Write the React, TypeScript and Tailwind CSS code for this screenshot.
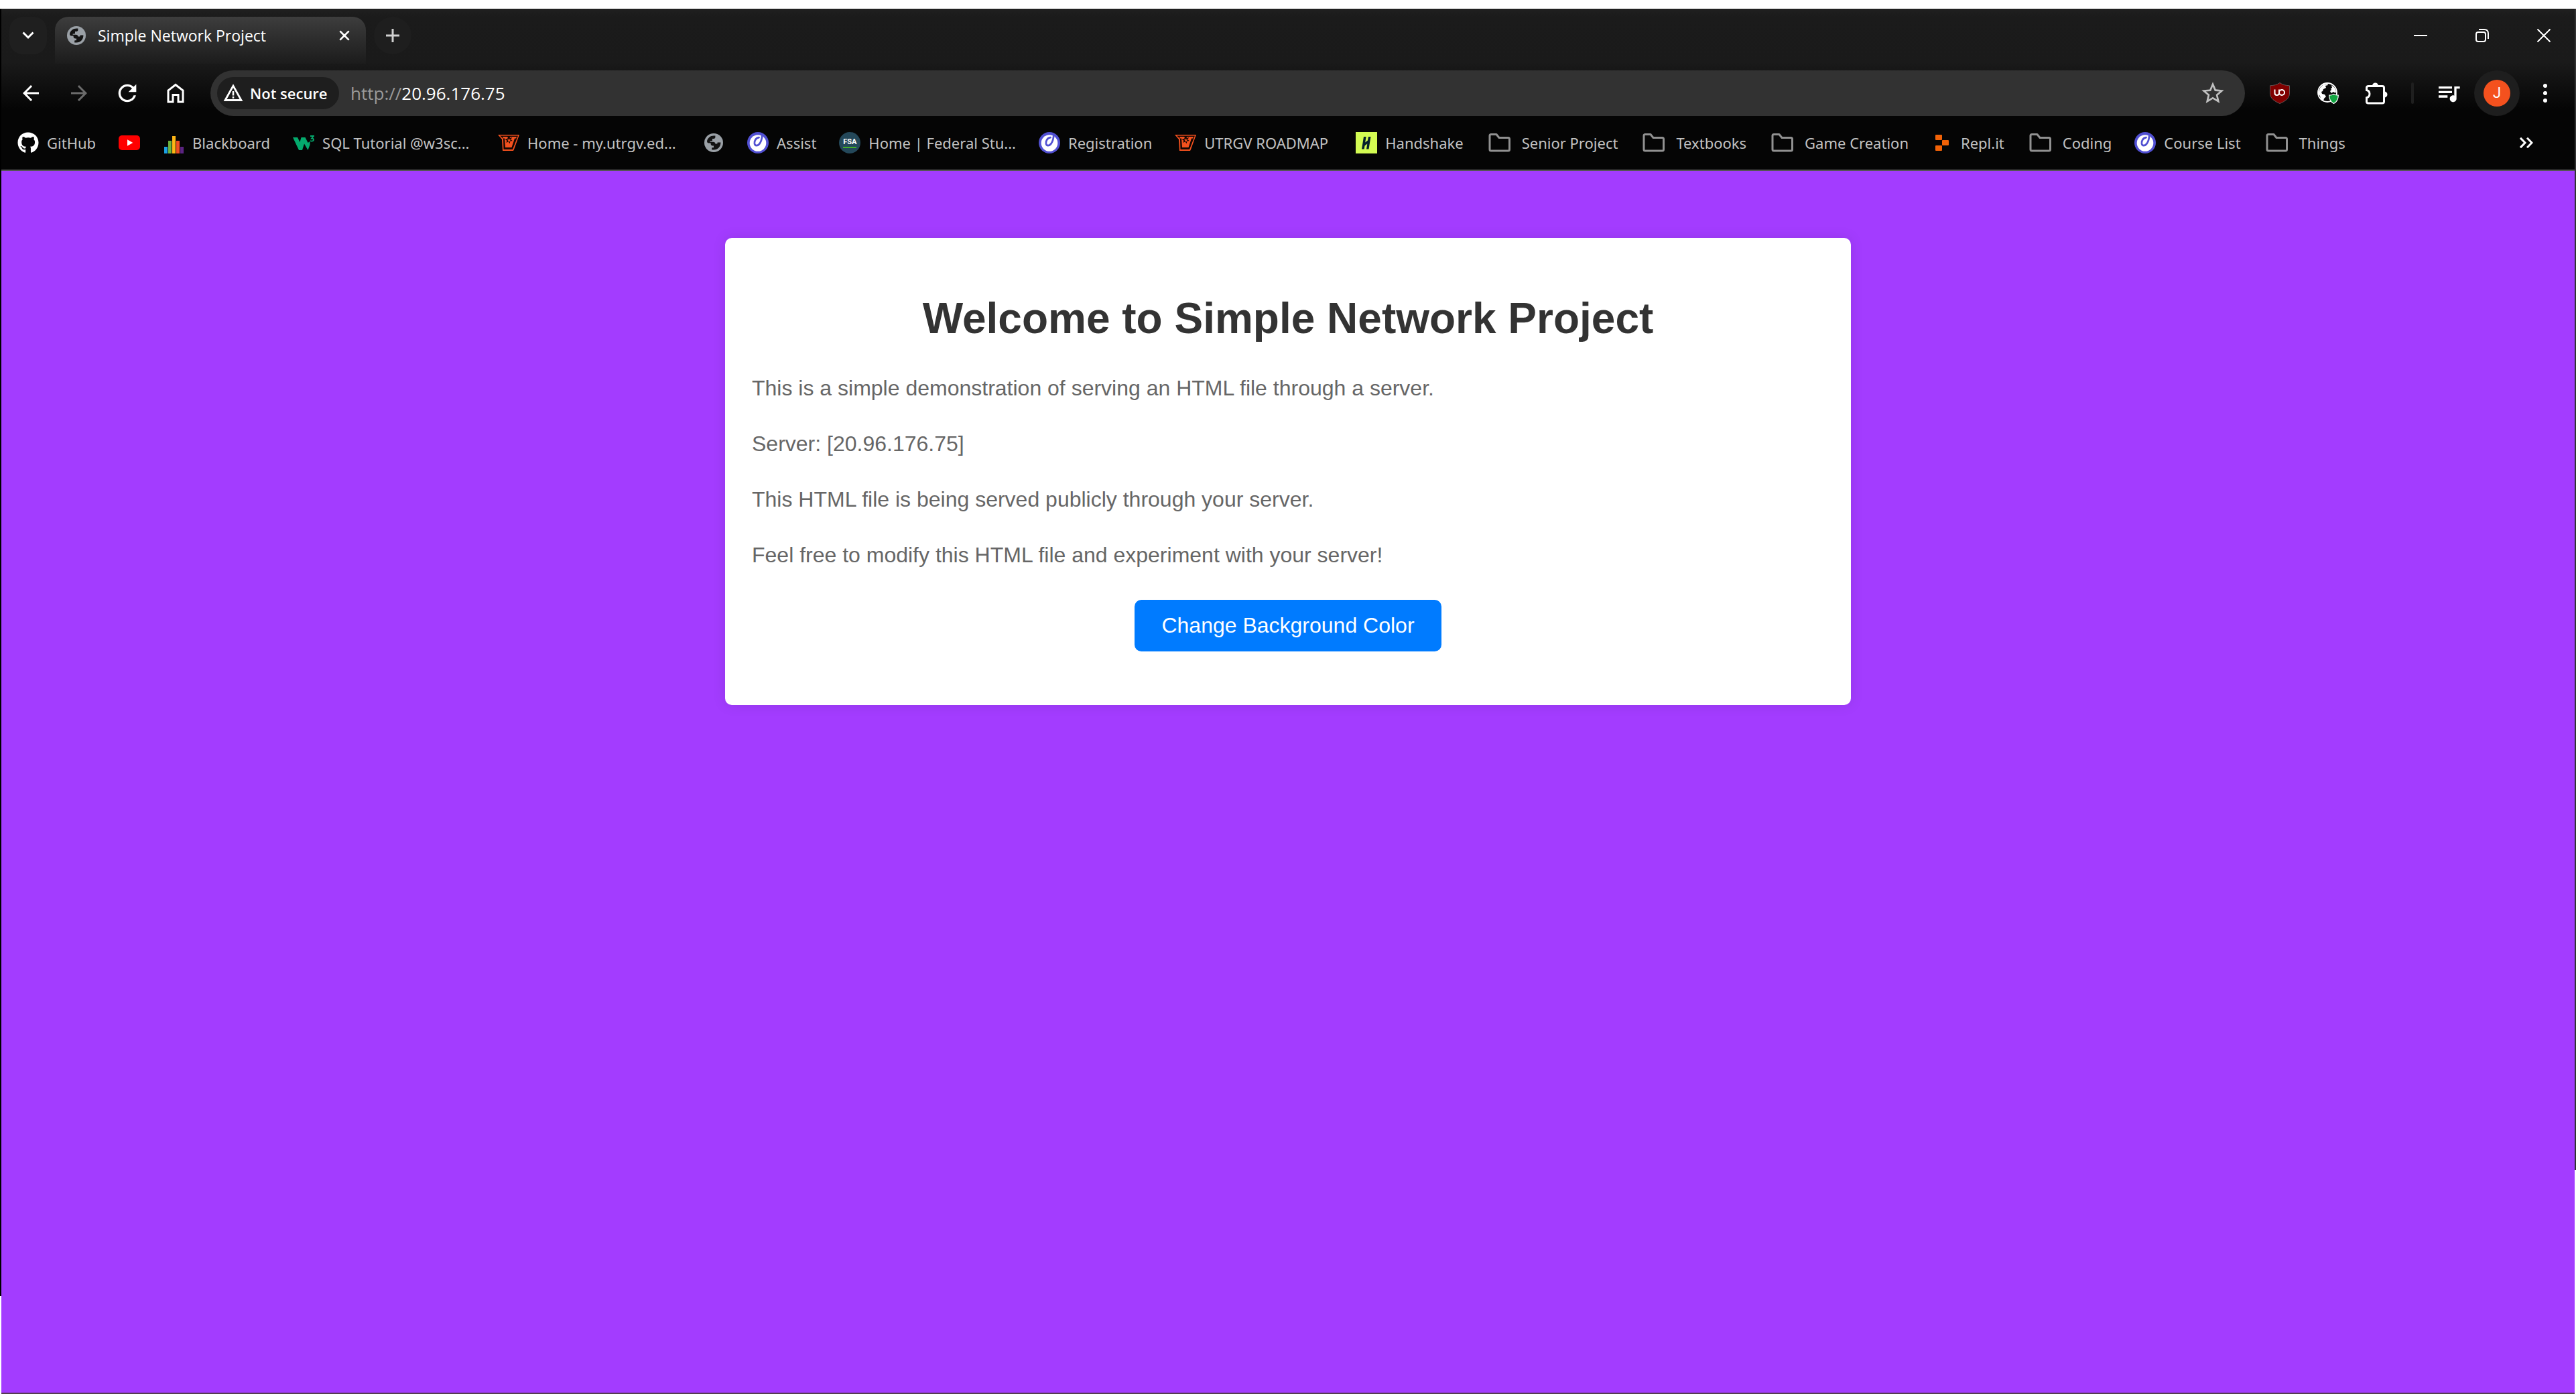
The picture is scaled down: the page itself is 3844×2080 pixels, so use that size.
import React, { useState } from 'react';
import { MdArrowBack, MdArrowForward, MdRefresh, MdStarBorder, MdQueueMusic } from 'react-icons/md';
import { FaGithub } from 'react-icons/fa';

function GlobeIcon() {
  return (
    <svg viewBox="0 0 28 28" className="size-7" aria-hidden="true">
      <circle cx="14" cy="14" r="14" fill="#9aa0a6" />
      <path
        d="M4 11.5C5 7 9 3.6 14 3.6h2.4v2.2c0 1.3-1 2.2-2.2 2.2H12v2.2c0 .8-.6 1.3-1.3 1.3H8.600v1.300h4.800c1.800 0 3 1.200 3 2.800h2.200c.6 0 1-.4 1-1v-1.200h4.800C24.600 19.800 20 24.400 14 24.400h-2.800v-2.200c-.0-.6.4-1 1-1h1.800v-2.700h-1.600c-1.600 0-2.800-1.200-2.800-2.800v-1.200H6.400C5 14.500 4 13.200 4 11.500Z"
        fill="#131313"
      />
    </svg>
  );
}

function YoutubeIcon() {
  return (
    <svg viewBox="0 0 32 32" className="size-8" aria-hidden="true">
      <rect x="0" y="5" width="32" height="22" rx="5" fill="#ff0000" />
      <path d="M13 11.200v9.600l8.300-4.800Z" fill="#fff" />
    </svg>
  );
}

function BarsIcon() {
  return (
    <svg viewBox="0 0 32 32" className="size-8" aria-hidden="true">
      <rect x="2" y="22" width="5" height="10" fill="#1ba1e2" />
      <rect x="8" y="13" width="5" height="19" fill="#6cb33f" />
      <rect x="14" y="6" width="5" height="26" fill="#fdb515" />
      <rect x="20" y="13" width="5" height="19" fill="#f04e23" />
      <rect x="26" y="22" width="5" height="10" fill="#5b2482" />
    </svg>
  );
}

function ZigzagIcon() {
  return (
    <svg viewBox="0 0 32 32" className="size-8" aria-hidden="true" fill="none">
      <path d="M0 8h7l3.500 7 2-7h6l4 8 3-2v5l-3 8-5.500-9.500L14 27H9Z" fill="#04aa6d" />
      <path d="M26 6h5l-3 3.500c2 0 3 .8 3 2.200 0 1.800-3 2.500-5 1.200" stroke="#04aa6d" strokeWidth="1.800" />
    </svg>
  );
}

function VaqueroIcon() {
  return (
    <svg viewBox="0 0 32 32" className="size-8" aria-hidden="true">
      <path d="M0 4h32l-8 22-1 2H7L6 11Z" fill="#f5511e" />
      <path d="M3 5.500h27l-8 20.500H8.500L8 10Z" fill="#140703" />
      <path d="M7 7h7l2 3 3-3h9l-1 2.500h-2L20.500 23H11L10 9.500H8Z" fill="#f5511e" />
      <path d="m16.500 6 1.200 3.200 3.600-1.200-2 3 2.600 2.300-3.500.2-.6 3.700-2.300-2.700-3 1.600.9-3.400-2.800-1.800 3.400-.8Z" fill="#140703" />
      <path d="m16.700 9.500.8 1.800 2 .2-1.500 1.300.4 2-1.700-1-1.700 1 .4-2-1.500-1.300 2-.2Z" fill="#f5511e" />
    </svg>
  );
}

function EllucianIcon() {
  return (
    <svg viewBox="0 0 32 32" className="size-8" aria-hidden="true" fill="none">
      <circle cx="16" cy="16" r="16" fill="#5150d2" />
      <circle cx="16" cy="16.500" r="12.300" fill="#fff" />
      <path
        d="M17.500 8.200C12.500 9 10.300 13.500 11 17.500c.7 3.300 4.300 3.500 7 .5 2.600-3 3.900-6.800 4.400-13.500"
        stroke="#5150d2"
        strokeWidth="2.800"
        strokeLinecap="round"
      />
    </svg>
  );
}

function FsaIcon() {
  return (
    <span className="flex size-8 flex-col items-center justify-center rounded-full bg-[#24485a]" aria-hidden="true">
      <span className="font-['Roboto',sans-serif] text-[11px] font-bold leading-3 text-white">FSA</span>
      <span className="mt-px h-0.5 w-5 bg-[#43b02a]" />
    </span>
  );
}

function HandshakeIcon() {
  return (
    <svg viewBox="0 0 32 32" className="size-8" aria-hidden="true">
      <rect width="32" height="32" fill="#d3fb52" />
      <path
        d="M12 7h3.600l-1.400 8.500 3.800-3L19 7h3.500l-3 18.500H16l1.300-8-3.800 3-.8 5H9Z"
        fill="#05202b"
      />
    </svg>
  );
}

function FolderIcon() {
  return (
    <svg viewBox="0 0 34 32" className="h-8 w-[34px]" aria-hidden="true" fill="none">
      <path
        d="M4 3.500h8l4 5h13.500q2 0 2 2V26q0 2-2 2H4q-2 0-2-2V5.500q0-2 2-2Z"
        stroke="#919191"
        strokeWidth="3"
        strokeLinejoin="round"
      />
    </svg>
  );
}

function ReplitIcon() {
  return (
    <svg viewBox="0 0 32 32" className="size-8" aria-hidden="true" fill="#f26207">
      <rect x="6" y="4" width="10" height="8" rx="1" />
      <rect x="16" y="12" width="10" height="8" rx="1" />
      <rect x="6" y="20" width="10" height="8" rx="1" />
    </svg>
  );
}

type Bookmark = { label?: string; name: string; icon: React.ReactNode; folder?: boolean; width?: string };

const bookmarks: Bookmark[] = [
  { name: 'GitHub', label: 'GitHub', icon: <FaGithub className="size-8 text-white" /> },
  { name: 'YouTube', icon: <YoutubeIcon /> },
  { name: 'Blackboard', label: 'Blackboard', icon: <BarsIcon /> },
  { name: 'SQL Tutorial', label: 'SQL Tutorial @w3sc...', icon: <ZigzagIcon />, width: 'min-w-[228px]' },
  { name: 'Home', label: 'Home - my.utrgv.ed...', icon: <VaqueroIcon />, width: 'min-w-[228px]' },
  { name: 'Site', icon: <GlobeIcon /> },
  { name: 'Assist', label: 'Assist', icon: <EllucianIcon /> },
  { name: 'Federal Student Aid', label: 'Home | Federal Stu...', icon: <FsaIcon /> },
  { name: 'Registration', label: 'Registration', icon: <EllucianIcon /> },
  { name: 'UTRGV ROADMAP', label: 'UTRGV ROADMAP', icon: <VaqueroIcon />, width: 'min-w-48' },
  { name: 'Handshake', label: 'Handshake', icon: <HandshakeIcon /> },
  { name: 'Senior Project', label: 'Senior Project', icon: <FolderIcon />, folder: true },
  { name: 'Textbooks', label: 'Textbooks', icon: <FolderIcon />, folder: true },
  { name: 'Game Creation', label: 'Game Creation', icon: <FolderIcon />, folder: true },
  { name: 'Repl.it', label: 'Repl.it', icon: <ReplitIcon /> },
  { name: 'Coding', label: 'Coding', icon: <FolderIcon />, folder: true },
  { name: 'Course List', label: 'Course List', icon: <EllucianIcon /> },
  { name: 'Things', label: 'Things', icon: <FolderIcon />, folder: true },
];

function IconButton({ label, children }: { label: string; children: React.ReactNode }) {
  return (
    <button type="button" aria-label={label} className="flex size-14 shrink-0 items-center justify-center rounded-full text-white">
      {children}
    </button>
  );
}

function TabStrip() {
  return (
    <div className="flex h-[82px] items-start pl-3 pt-3">
      <button type="button" aria-label="Search tabs" className="flex size-14 items-center justify-center rounded-[20px] bg-[#1f1f1f]">
        <svg viewBox="0 0 18 12" className="h-3 w-[18px]" fill="none" stroke="#fff" strokeWidth="3" aria-hidden="true">
          <path d="m1.500 1.500 7.500 7.500 7.500-7.500" />
        </svg>
      </button>
      <div className="ml-3 flex h-[70px] w-[464px] items-start rounded-t-[20px] bg-linear-to-b from-[#3d3d3d] to-[#1c1c1c]">
        <div className="flex h-14 flex-1 items-center pl-[18px] pr-5">
          <GlobeIcon />
          <span className="ml-[18px] flex-1 whitespace-nowrap text-[23px] leading-8 text-white">Simple Network Project</span>
          <button type="button" aria-label="Close tab" className="flex size-6 items-center justify-center">
            <svg viewBox="0 0 18 18" className="size-4" stroke="#fff" strokeWidth="3" aria-hidden="true">
              <path d="m1.500 1.500 15 15m0-15-15 15" />
            </svg>
          </button>
        </div>
      </div>
      <button type="button" aria-label="New tab" className="ml-3 flex size-14 items-center justify-center rounded-full bg-[#1e1e1e]">
        <svg viewBox="0 0 20 20" className="size-5" stroke="#d0d0d0" strokeWidth="3" aria-hidden="true">
          <path d="M10 0v20M0 10h20" />
        </svg>
      </button>
      <div className="ml-auto flex">
        <button type="button" aria-label="Minimize" className="flex h-14 w-[92px] items-center justify-center">
          <span className="h-0.5 w-5 bg-white" />
        </button>
        <button type="button" aria-label="Restore" className="flex h-14 w-[92px] items-center justify-center">
          <svg viewBox="0 0 20 20" className="size-5" fill="none" stroke="#fff" strokeWidth="2" aria-hidden="true">
            <rect x="1" y="5" width="14" height="14" rx="3" />
            <path d="M5 1h8q6 0 6 6v8" />
          </svg>
        </button>
        <button type="button" aria-label="Close" className="flex h-14 w-[92px] items-center justify-center">
          <svg viewBox="0 0 20 20" className="size-5" stroke="#fff" strokeWidth="2" aria-hidden="true">
            <path d="m.5.500 19 19m0-19-19 19" />
          </svg>
        </button>
      </div>
    </div>
  );
}

function Toolbar() {
  return (
    <div className="flex h-[88px] items-center px-4">
      <div className="flex gap-4">
        <IconButton label="Back">
          <MdArrowBack className="size-9" />
        </IconButton>
        <button type="button" aria-label="Forward" disabled className="flex size-14 items-center justify-center text-[#6b6b6b]">
          <MdArrowForward className="size-9" />
        </button>
        <IconButton label="Reload">
          <MdRefresh className="size-10" />
        </IconButton>
        <IconButton label="Home">
          <svg viewBox="0 0 26 30" className="h-[30px] w-[26px]" fill="none" stroke="#fff" strokeWidth="3" aria-hidden="true">
            <path d="M2 28V11l11-8.500L24 11v17h-7V17.500H9V28Z" />
          </svg>
        </IconButton>
      </div>
      <div className="ml-6 flex h-[68px] flex-1 items-center rounded-full bg-[#323232] pl-[10px] pr-5">
        <button type="button" className="flex h-12 w-[182px] items-center gap-[10px] rounded-full bg-[#1e1e1e] pl-[9px] text-white">
          <svg viewBox="0 0 30 30" className="size-[30px]" fill="none" stroke="#fff" aria-hidden="true">
            <path d="M3 25.500 15 4l12 21.500Z" strokeWidth="2.800" />
            <path d="M15 12v6.500M15 20v2.800" strokeWidth="2.600" />
          </svg>
          <span className="whitespace-nowrap text-[22px] font-semibold leading-8">Not secure</span>
        </button>
        <label htmlFor="address" className="ml-[17px] text-[26px] leading-9 text-[#9a9a9a]">
          http://
        </label>
        <input
          id="address"
          type="text"
          defaultValue="20.96.176.75"
          className="min-w-0 flex-1 bg-transparent text-[26px] leading-9 text-white outline-none"
        />
        <button type="button" aria-label="Bookmark this page" className="flex size-14 items-center justify-center text-[#c0c0c0]">
          <MdStarBorder className="size-10" />
        </button>
      </div>
      <div className="ml-6 flex items-center gap-4">
        <IconButton label="uBlock Origin">
          <svg viewBox="0 0 30 32" className="h-8 w-[30px]" aria-hidden="true" fill="none">
            <path d="M15 .5C19 3.500 24 4.500 29.500 4.800V16c0 8-6.500 12-14.500 15.500C7 28 .5 24 .5 16V4.800C6 4.500 11 3.500 15 .5Z" fill="#800000" stroke="#6b6b6b" strokeWidth=".8" />
            <path d="M7.500 10.500v5.500q0 3 3.200 3t3.300-3v-5.500M14 15a4 4 0 1 0 8 0a4 4 0 1 0-8 0" stroke="#fff" strokeWidth="2" />
          </svg>
        </IconButton>
        <IconButton label="Web protection">
          <svg viewBox="0 0 32 32" className="size-8" aria-hidden="true">
            <circle cx="15" cy="15" r="14" fill="#0a0a0a" stroke="#fff" strokeWidth="1.800" />
            <path d="m4 8 5-5 6-1 1 2-4 1 1 3-4 2-1 3-2 1 1 3 4 1 2 3-3 3-1 4-4-3-1-5-3-3Z" fill="#fff" />
            <path d="m21 4 5 4 2 5-1 3-3-2-3 2-2-3 2-2-1-2 2-1Z" fill="#fff" />
            <path d="M24.500 17.500c2 1.200 4 1.700 6.800 1.700 0 6-2.300 10-6.800 12.300-4.500-2.300-6.800-6.300-6.800-12.300 2.800 0 4.800-.5 6.800-1.700Z" fill="#12a541" stroke="#fff" strokeWidth="1.200" />
          </svg>
        </IconButton>
        <IconButton label="Extensions">
          <svg viewBox="0 0 34 34" className="size-[34px]" aria-hidden="true" fill="none">
            <path
              d="M5.500 6.500H26q2.500 0 2.500 2.500v20.500q0 2.500-2.500 2.500H5q-2.500 0-2.500-2.500v-5.700q4.500-1.300 4.500-5.800t-4.500-5.500V9q0-2.500 3-2.500Z"
              stroke="#fff"
              strokeWidth="3"
            />
            <path d="M11 6a4.500 4.500 0 0 1 9 0ZM29 14.500a4.500 4.500 0 0 1 0 9Z" fill="#fff" />
          </svg>
        </IconButton>
      </div>
      <span className="ml-6 h-8 w-1 rounded-full bg-[#1f1f1f]" />
      <div className="ml-6 flex items-center gap-[10px]">
        <IconButton label="Media controls">
          <MdQueueMusic className="size-10" />
        </IconButton>
        <button type="button" aria-label="Profile" className="flex size-[68px] items-center justify-center rounded-full bg-[#1e1e1e]">
          <span className="flex size-10 items-center justify-center rounded-full bg-[#f4511e] font-['Roboto',sans-serif] text-[22px] leading-none text-white">
            J
          </span>
        </button>
        <IconButton label="Menu">
          <svg viewBox="0 0 8 28" className="h-7 w-2" fill="#fff" aria-hidden="true">
            <circle cx="4" cy="3" r="3" />
            <circle cx="4" cy="14" r="3" />
            <circle cx="4" cy="25" r="3" />
          </svg>
        </IconButton>
      </div>
    </div>
  );
}

function BookmarksBar() {
  return (
    <nav aria-label="Bookmarks" className="flex h-[60px] items-center pl-6 pr-[60px]">
      <div className="flex flex-1 items-center gap-[34px]">
        {bookmarks.map((b) => (
          <a
            key={b.name}
            href="#"
            aria-label={b.name}
            className={b.folder ? 'flex items-center gap-4 pl-[3px] text-[#c2c2c2]' : 'flex items-center gap-3 text-[#c2c2c2]'}
          >
            <span className="flex min-w-8 shrink-0 items-center justify-center">{b.icon}</span>
            {b.label && (
              <span className={`whitespace-nowrap font-['Noto_Sans',sans-serif] text-[22px] leading-8 ${b.width ?? ''}`}>{b.label}</span>
            )}
          </a>
        ))}
      </div>
      <button type="button" aria-label="More bookmarks" className="flex size-6 items-center justify-center">
        <svg viewBox="0 0 20 16" className="h-4 w-5" fill="none" stroke="#fff" strokeWidth="3" aria-hidden="true">
          <path d="m1 .8 7 7.200-7 7.200M11 .8 18 8l-7 7.200" />
        </svg>
      </button>
    </nav>
  );
}

const colors = ['bg-[#a33cff]', 'bg-[#33b5ff]', 'bg-[#ff7a3c]', 'bg-[#3cff8a]'];

export default function App() {
  const [color, setColor] = useState(0);
  return (
    <div className="flex min-h-screen flex-col bg-white font-['Open_Sans','Noto_Sans',sans-serif]">
      <div className="h-[13px] bg-white" />
      <div className="flex flex-1">
        <div className="flex w-0.5 flex-col">
          <span className="flex-1 bg-black" />
          <span className="h-[146px] bg-white" />
        </div>
        <div className="flex min-w-0 flex-1 flex-col">
          <header className="border-b-2 border-[#555] bg-[linear-gradient(#202020_0px,#1b1b1b_12px,#1a1a1a_80px,#050505_150px)] pb-[10px]">
            <TabStrip />
            <Toolbar />
            <BookmarksBar />
          </header>
          <main className={`flex-1 border-b-2 border-[#553c50] pt-[100px] font-['Liberation_Sans',Arial,sans-serif] ${colors[color]}`}>
            <section className="mx-auto max-w-[1680px] rounded-[10px] bg-white px-10 pb-20 pt-[83px] shadow-[0_0_20px_rgba(0,0,0,0.1)]">
              <h1 className="text-center text-[64px] font-bold leading-[74px] text-[#333]">Welcome to Simple Network Project</h1>
              <div className="mt-[42px] flex flex-col gap-8 text-[32px] leading-[51px] text-[#666]">
                <p>This is a simple demonstration of serving an HTML file through a server.</p>
                <p>Server: [20.96.176.75]</p>
                <p>This HTML file is being served publicly through your server.</p>
                <p>Feel free to modify this HTML file and experiment with your server!</p>
              </div>
              <button
                type="button"
                onClick={() => setColor((color + 1) % colors.length)}
                className="mx-auto mt-[41px] block rounded-[10px] bg-[#007bff] px-10 py-5 text-[32px] leading-[37px] text-white"
              >
                Change Background Color
              </button>
            </section>
          </main>
        </div>
        <div className="flex w-0.5 flex-col">
          <span className="flex-1 bg-[#333]" />
          <span className="h-[334px] bg-white" />
        </div>
      </div>
    </div>
  );
}
